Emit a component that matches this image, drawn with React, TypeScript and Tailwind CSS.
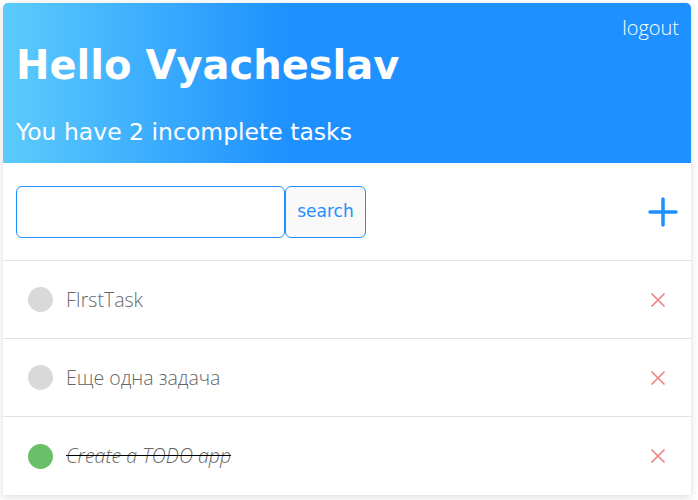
import { useState } from "react";

type Task = { id: number; title: string; done: boolean };

const initialTasks: Task[] = [
  { id: 1, title: "FIrstTask", done: false },
  { id: 2, title: "Еще одна задача", done: false },
  { id: 3, title: "Create a TODO app", done: true },
];

const PlusIcon = () => (
  <svg width="30" height="30" viewBox="0 0 30 30" fill="none">
    <path d="M15 2v26M2 15h26" stroke="#1e90ff" strokeWidth="3.5" strokeLinecap="round" />
  </svg>
);

const CrossIcon = () => (
  <svg width="16" height="16" viewBox="0 0 16 16" fill="none">
    <path d="M1.5 1.5l13 13M14.5 1.5l-13 13" stroke="#f08080" strokeWidth="1.6" />
  </svg>
);

export default function App() {
  const [tasks] = useState(initialTasks);
  const left = tasks.filter((t) => !t.done).length;

  return (
    <div className="min-h-screen bg-white pt-[3px] pl-[3px]" style={{ fontFamily: "'DejaVu Sans', sans-serif" }}>
      <div className="w-[688px] rounded-t-[5px] bg-white shadow-[0_2px_8px_rgba(0,0,0,0.15)]">
        <div className="relative h-[160px] rounded-t-[5px] bg-[linear-gradient(to_right,#5ccbfb_0%,#1e90ff_42%,#1e90ff_100%)] px-[13px] text-white">
          <button className="absolute right-[12px] top-[10px] text-[20px] font-light font-['Open_Sans',sans-serif]">
            logout
          </button>
          <h1 className="pt-[38px] text-[40px] font-bold leading-[48px]">Hello Vyacheslav</h1>
          <p className="mt-[27px] text-[23.5px] leading-[32px]">
            You have {left} incomplete tasks
          </p>
        </div>
        <div className="flex h-[98px] items-center justify-between border-b border-[#e3e3e3] pl-[13px] pr-[13px]">
          <div className="flex">
            <input className="h-[52px] w-[269px] rounded-[6px] border border-[#1e90ff] bg-white px-2 outline-none" />
            <button className="h-[52px] w-[81px] rounded-[6px] border border-[#1e90ff] bg-[#f9f9f9] text-[17px] text-[#1e90ff]">
              search
            </button>
          </div>
          <PlusIcon />
        </div>
        {tasks.map((t, i) => (
          <div
            key={t.id}
            className={`flex h-[78px] items-center justify-between pl-[25px] pr-[25px] ${i < tasks.length - 1 ? "border-b border-[#e3e3e3]" : ""}`}
          >
            <div className="flex items-center gap-[13px]">
              <span className={`h-[25px] w-[25px] rounded-full ${t.done ? "bg-[#6abf69]" : "bg-[#d9d9d9]"}`} />
              <span
                className={`text-[19.5px] font-light text-[#666] font-['Open_Sans',sans-serif] ${t.done ? "italic line-through decoration-black" : ""}`}
              >
                {t.title}
              </span>
            </div>
            <CrossIcon />
          </div>
        ))}
      </div>
    </div>
  );
}
